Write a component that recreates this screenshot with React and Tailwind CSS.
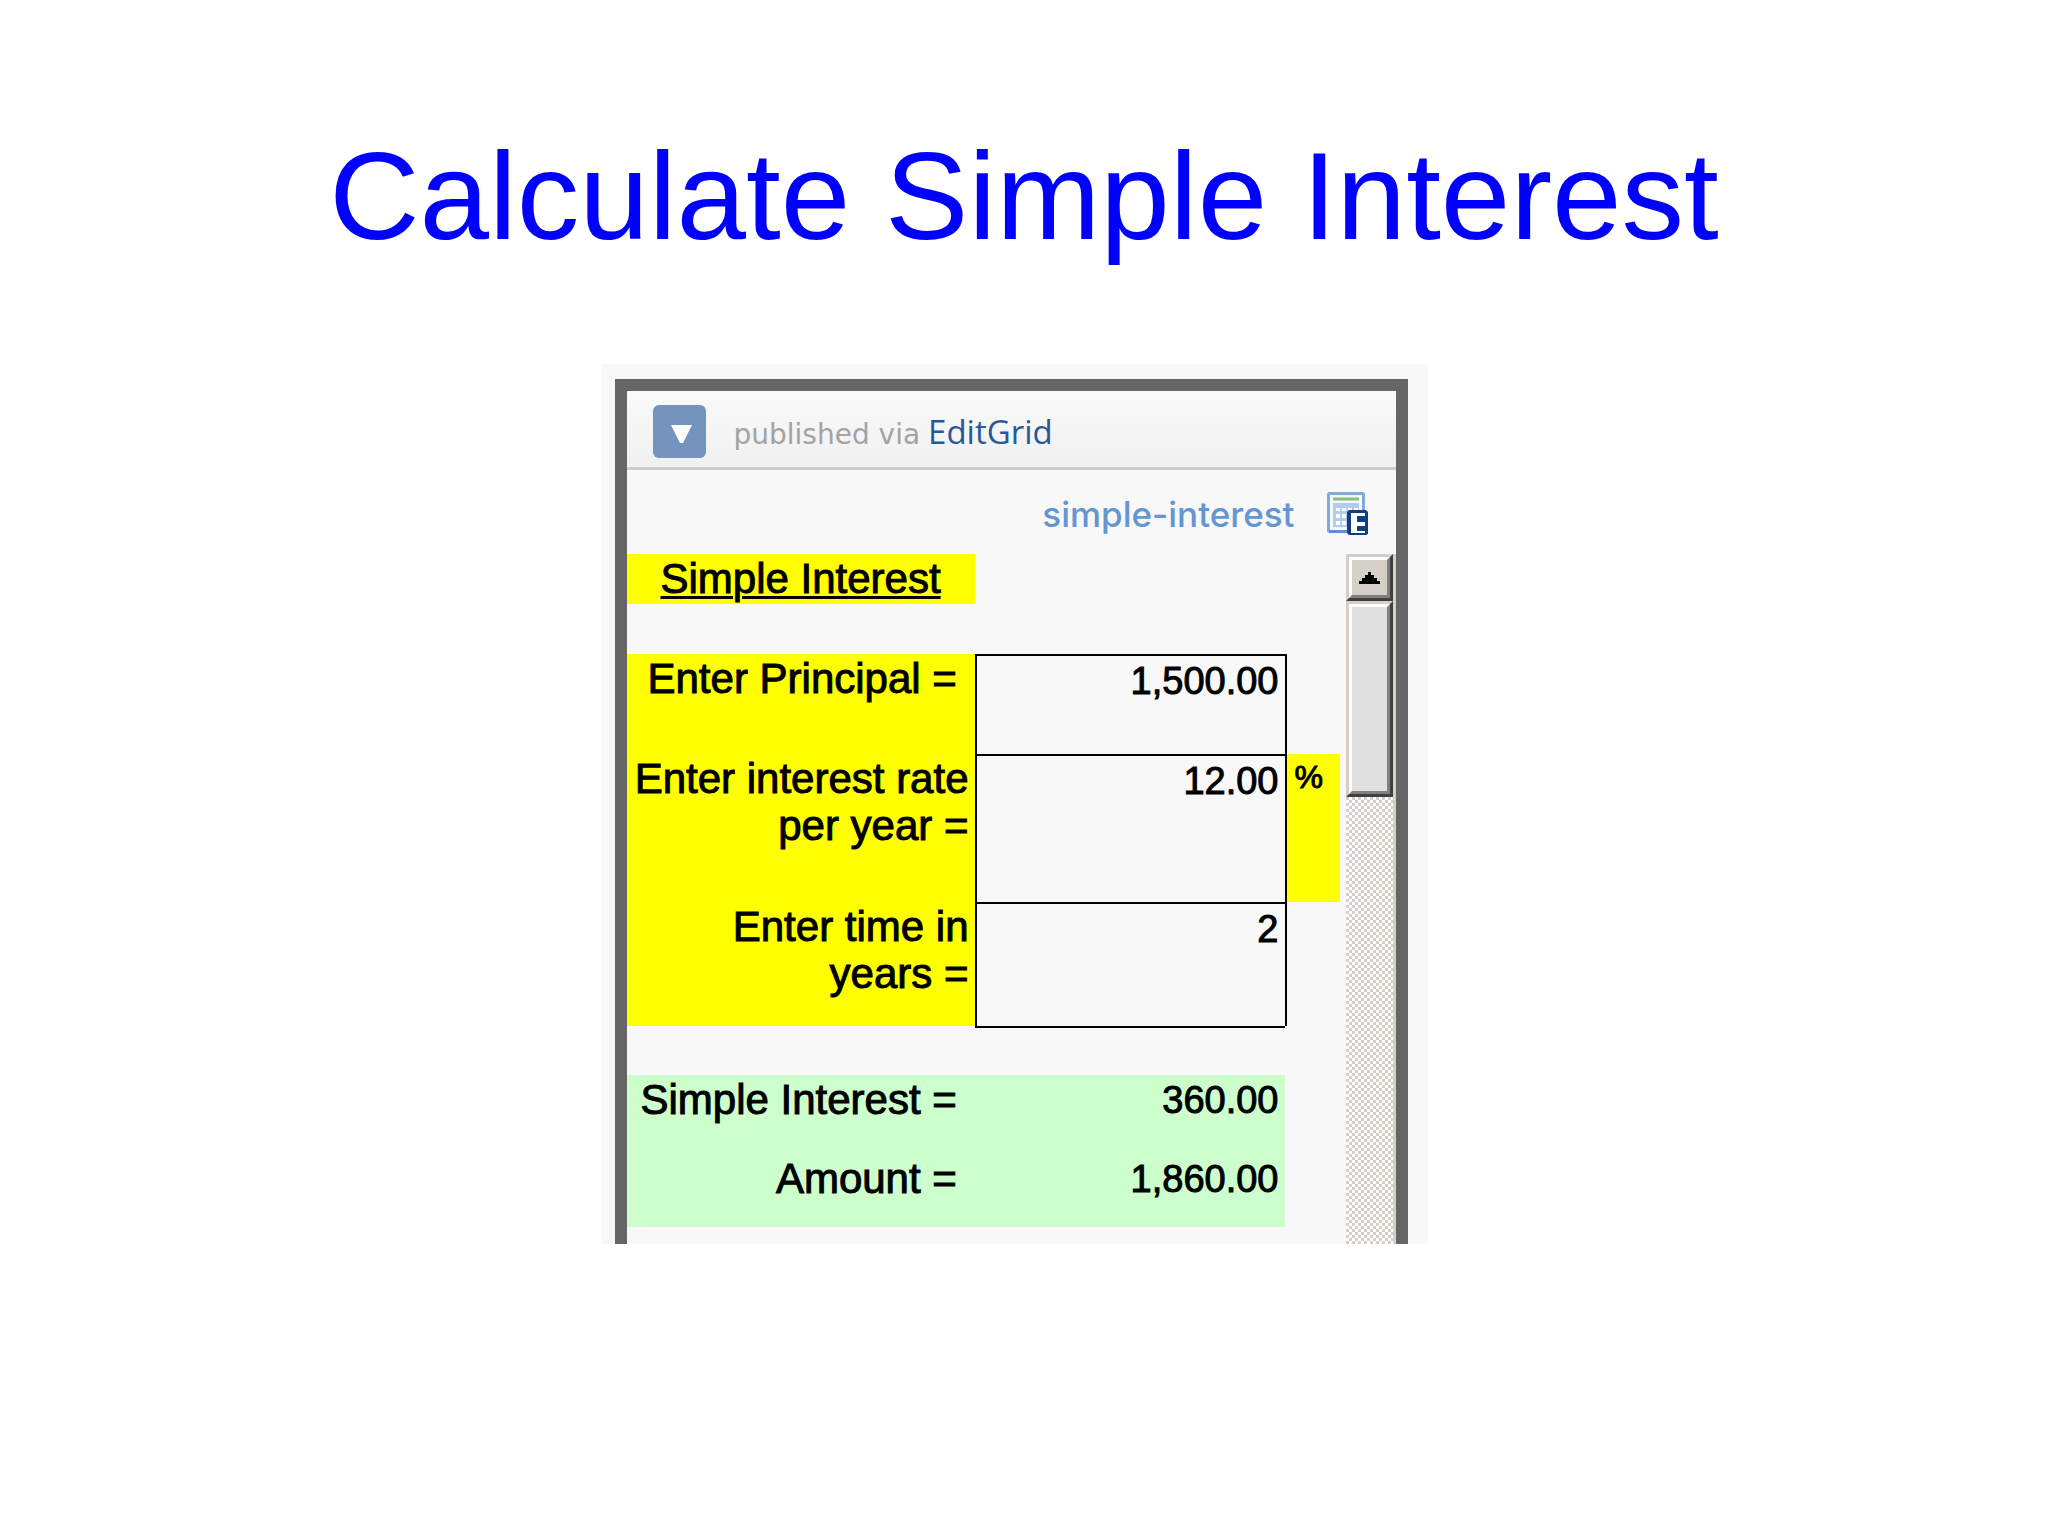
const inputRows = [
  {
    id: "principal",
    lines: ["Enter Principal =\u00a0"],
    value: "1,500.00",
    row: "h-[100px]",
  },
  {
    id: "rate",
    lines: ["Enter interest rate", "per year ="],
    value: "12.00",
    unit: "%",
    row: "h-[148px]",
  },
  {
    id: "time",
    lines: ["Enter time in", "years ="],
    value: "2",
    row: "h-[124px]",
  },
];

const resultRows = [
  { label: "Simple Interest =\u00a0", value: "360.00", row: "h-[79px]" },
  { label: "Amount =\u00a0", value: "1,860.00", row: "h-[73px]" },
];

function SheetIcon() {
  return (
    <svg width="41" height="44" viewBox="0 0 41 44" aria-hidden="true">
      <rect x="1.5" y="1.5" width="35" height="38" rx="1" fill="#f4f8fd" stroke="#86a9dc" strokeWidth="3" />
      <path d="M2 39.5h20" stroke="#5f8fd0" strokeWidth="3" />
      <path d="M6 7h26" stroke="#84c374" strokeWidth="3" />
      <path d="M6 11h26v8H21v16H6z" fill="#b3cbec" />
      <path
        d="M9 16h4v3H9zM15 16h4v3h-4zM21 16h4v2h-4zM27 16h4v2h-4zM9 22h4v4H9zM15 22h4v4h-4zM9 29h4v4H9zM15 29h4v4h-4z"
        fill="#fff"
      />
      <path d="M22 18h17l2 2v22l-2 1H22l-2-2V20z" fill="#0f407c" />
      <path d="M24 21h14v3h-8v6h8v4h-8v5h8v2H24z" fill="#fff" />
    </svg>
  );
}

function Scrollbar() {
  return (
    <div className="flex w-[50px] shrink-0 flex-col border-r-3 border-[#d4d0c8] bg-[conic-gradient(#d4d0c8_25%,#fff_0_50%,#d4d0c8_0_75%,#fff_0)] bg-[length:6px_6px]">
      <button
        type="button"
        aria-label="Scroll up"
        className="h-[47px] border-3 border-t-[#d4d0c8] border-r-[#404040] border-b-[#404040] border-l-[#d4d0c8]"
      >
        <span className="flex h-full items-center justify-center border-3 border-t-white border-r-[#808080] border-b-[#808080] border-l-white bg-[#d4d0c8]">
          <svg width="21" height="12" viewBox="0 0 21 12" aria-hidden="true">
            <path d="M9 0h3v3h3v3h3v3h3v3H0V9h3V6h3V3h3z" fill="#000" />
          </svg>
        </span>
      </button>
      <div className="h-[196px] border-3 border-t-[#d4d0c8] border-r-[#404040] border-b-[#404040] border-l-[#d4d0c8]">
        <div className="h-full border-3 border-t-white border-r-[#808080] border-b-[#808080] border-l-white bg-[#e0e0e0]" />
      </div>
    </div>
  );
}

function Sheet() {
  return (
    <table className="min-w-0 flex-1 table-fixed border-separate border-spacing-0 text-[42px] leading-[47px] text-black">
      <colgroup>
        <col className="w-[348px]" />
        <col className="w-[310px]" />
        <col className="w-[2px]" />
        <col className="w-[53px]" />
        <col />
      </colgroup>
      <tbody>
        <tr className="h-[50px]">
          <th className="bg-[#ffff00] p-0 pt-px text-center align-top font-normal underline decoration-3 underline-offset-3 [-webkit-text-stroke:1px_#000]">
            Simple Interest
          </th>
          <td colSpan={4} className="p-0" />
        </tr>
        <tr className="h-[50px]">
          <td colSpan={5} className="p-0" />
        </tr>
        {inputRows.map((r) => (
          <tr key={r.id} className={r.row}>
            <th className="bg-[#ffff00] py-0 pt-px pr-[6px] pl-0 text-right align-top font-normal [-webkit-text-stroke:1px_#000]">
              <label htmlFor={r.id} className="block">
                {r.lines.map((line) => (
                  <span key={line} className="block">
                    {line}
                  </span>
                ))}
              </label>
            </th>
            <td colSpan={2} className="border-x-2 border-t-2 border-black p-0 align-top">
              <input
                id={r.id}
                type="text"
                defaultValue={r.value}
                className="block w-full bg-transparent pt-[2px] pr-[6px] text-right text-[38px] leading-[47px] outline-none [-webkit-text-stroke:1px_#000]"
              />
            </td>
            {r.unit ? (
              <td className="bg-[#ffff00] py-0 pr-0 pl-2 align-top text-[32px] [-webkit-text-stroke:1px_#000]">{r.unit}</td>
            ) : (
              <td className="p-0" />
            )}
            <td className="p-0" />
          </tr>
        ))}
        <tr className="h-[49px]">
          <td className="p-0" />
          <td className="border-t-2 border-black p-0" />
          <td colSpan={3} className="p-0" />
        </tr>
        {resultRows.map((r) => (
          <tr key={r.label} className={r.row}>
            <th className="bg-[#ccffcc] py-0 pt-px pr-[6px] pl-0 text-right align-top font-normal [-webkit-text-stroke:1px_#000]">
              {r.label}
            </th>
            <td className="bg-[#ccffcc] p-0 pt-[2px] pr-[6px] text-right align-top text-[38px] [-webkit-text-stroke:1px_#000]">
              {r.value}
            </td>
            <td colSpan={3} className="p-0" />
          </tr>
        ))}
        <tr className="h-[17px]">
          <td colSpan={5} className="p-0" />
        </tr>
      </tbody>
    </table>
  );
}

export default function App() {
  return (
    <main className="flex min-h-screen flex-col items-center bg-white pt-[133px] font-['Liberation_Sans',Arial,sans-serif]">
      <h1 className="text-center text-[125px] leading-none text-[#0000ff]">Calculate Simple Interest</h1>
      <div className="mt-[106px] w-full max-w-[847px] pr-5">
        <section className="bg-[#f8f8f8] pt-[15px] pr-5 pl-[14px]">
          <div className="border-x-12 border-t-12 border-[#666666]">
            <header className="flex items-center border-b-3 border-[#cccccc] bg-linear-to-b from-[#fafafa] to-[#f0f0f0] pt-[14px] pb-[9px] pl-[26px]">
              <button
                type="button"
                aria-label="Open menu"
                className="flex size-[53px] items-center justify-center rounded-md bg-[#7394bd] pt-1 pl-1"
              >
                <svg width="21" height="18" viewBox="0 0 21 18" aria-hidden="true">
                  <path d="M0 0h21L12 18H9z" fill="#fff" />
                </svg>
              </button>
              <p className="ml-7 flex items-baseline gap-2 pt-1 font-['DejaVu_Sans',Verdana,sans-serif] text-[28px] leading-10 text-[#a3a3a3]">
                published via
                <a href="#editgrid" className="font-['Open_Sans',Tahoma,sans-serif] text-[33px] font-medium text-[#28589c]">
                  EditGrid
                </a>
              </p>
            </header>
            <div className="flex h-[84px] items-center justify-end gap-8 pt-1 pr-7">
              <a href="#simple-interest" className="font-['Inter',Arial,sans-serif] text-[35px] leading-10 font-medium text-[#6496d2]">
                simple-interest
              </a>
              <SheetIcon />
            </div>
            <div className="flex">
              <Sheet />
              <Scrollbar />
            </div>
          </div>
        </section>
      </div>
    </main>
  );
}
